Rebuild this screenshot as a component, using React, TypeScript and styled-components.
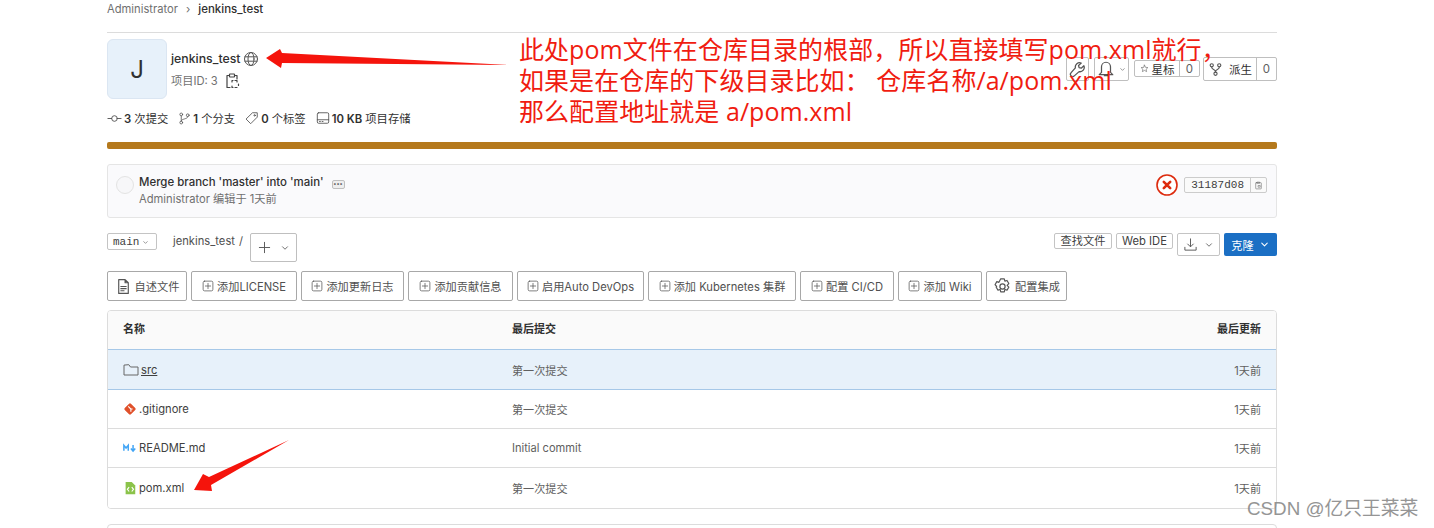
import React from "react";
import styled, { createGlobalStyle } from "styled-components";

const Global = createGlobalStyle`
  html, body { margin: 0; padding: 0; background: #fff; overflow: hidden; }
  body { width: 1434px; height: 528px; font-family: Inter, "Noto Sans CJK SC", "Liberation Sans", sans-serif; font-size: 11px; color: #303030; }
  * { box-sizing: border-box; }
`;
const Page = styled.div`position: relative; width: 1434px; height: 528px; overflow: hidden; padding: 0 157px 0 107px;`;
const Crumbs = styled.div`height: 33px; border-bottom: 1px solid #dcdcdc; padding-top: 3px; display: flex; gap: 8px; line-height: 13px; font-size: 11.2px; color: #707070;`;
const CrumbNow = styled.b`font-weight: 500; color: #303030; font-size: 11.5px;`;
const Header = styled.div`display: flex; margin-top: 6px; height: 60px;`;
const Avatar = styled.div`width: 60px; height: 60px; border-radius: 6px; border: 1px solid #dbe6f2; background: #e7f1fa; font-size: 24px; display: flex; align-items: center; justify-content: center; color: #303030;`;
const Titles = styled.div`margin-left: 4px; padding-top: 12px; width: 300px;`;
const Name = styled.div`display: flex; align-items: center; gap: 2px; font-size: 12.3px; line-height: 16px; color: #303030; font-weight: 500;`;
const Sub = styled.div`display: flex; align-items: center; gap: 6px; margin-top: 6px; font-size: 11.2px; line-height: 14px; color: #707070;`;
const Actions = styled.div`margin-left: auto; display: flex; align-items: flex-start; gap: 5px; padding-top: 18px; color: #303030;`;
const IconBtn = styled.div`height: 24px; border: 1px solid #bfbfbf; border-radius: 2px; display: flex; align-items: center; justify-content: center; gap: 4px; width: ${p => p.$w}px; background: #fff;`;
const Group = styled.div`height: ${p => p.$h}px; width: ${p => p.$w}px; margin-top: ${p => p.$m}px; margin-left: ${p => p.$l}px; border: 1px solid #bfbfbf; border-radius: 2px; display: flex; align-items: center; font-size: 11.5px; background: #fff;`;
const GroupLabel = styled.span`flex: 1; display: flex; align-items: center; justify-content: center; gap: 3px; height: 100%;`;
const Count = styled.span`border-left: 1px solid #bfbfbf; height: 100%; width: 20px; display: flex; align-items: center; justify-content: center; color: #606060;`;
const Stats = styled.div`display: flex; gap: 10px; margin-top: 11px; height: 16px; font-size: 11.3px; color: #303030; align-items: center;`;
const Stat = styled.span`display: flex; align-items: center; gap: 2px; b { font-weight: 600; }`;
const Bar = styled.div`height: 7px; margin-top: 16px; border-radius: 2px; background: #b5791c;`;
const Commit = styled.div`height: 54px; margin-top: 15px; border: 1px solid #e5e5e5; border-radius: 3px; background: #fafafc; display: flex; align-items: center; padding: 0 9px 0 8px;`;
const Circle = styled.div`width: 18px; height: 18px; margin-bottom: 12px; border-radius: 50%; border: 1px solid #e3e3e3; background: #f7f7f9;`;
const CommitText = styled.div`margin-left: 5px; line-height: 17px;`;
const CommitTitle = styled.div`font-size: 11.45px; font-weight: 500; color: #303030; display: flex; align-items: center; gap: 8px;`;
const CommitMeta = styled.div`font-size: 11.2px; color: #707070;`;
const Dots = styled.span`width: 13px; height: 9px; border: 1px solid #bfbfbf; border-radius: 2px; background: #eee; font-size: 6px; line-height: 6px; text-align: center; color: #555; margin-top: 4px;`;
const FailIcon = styled.div`margin-left: auto; display: flex; margin-right: 6px; margin-bottom: 12px;`;
const Sha = styled.div`height: 16px; margin-bottom: 12px; border: 1px solid #ccc; border-radius: 2px; display: flex; align-items: center; font-family: "Liberation Mono", monospace; font-size: 11px; color: #404040; background: #fafafa;`;
const ShaText = styled.span`padding: 0 6px 0 6px;`;
const ShaCopy = styled.span`border-left: 1px solid #ccc; height: 100%; width: 16px; display: flex; align-items: center; justify-content: center;`;
const Repo = styled.div`display: flex; align-items: flex-start; height: 29px; margin-top: 15px;`;
const Branch = styled.div`width: 50px; height: 17px; border: 1px solid #c4c4c4; border-radius: 2px; font-family: "Liberation Mono", monospace; font-size: 11px; display: flex; align-items: center; padding: 1px 0 0 5px; gap: 3px; color: #404040;`;
const Path = styled.div`margin-left: 16px; padding-top: 1px; font-size: 11.2px; color: #505050; display: flex; gap: 4px; line-height: 15px;`;
const Plus = styled.div`margin-left: 7px; width: 47px; height: 29px; border: 1px solid #bfbfbf; border-radius: 2px; display: flex; align-items: center; justify-content: center; gap: 8px;`;
const RepoRight = styled.div`margin-left: auto; display: flex; gap: 4px; align-items: flex-start;`;
const Small = styled.div`height: 16px; width: ${p => p.$w}px; border: 1px solid #c4c4c4; border-radius: 2px; text-align: center; font-size: 11.2px; line-height: 14px; color: #404040;`;
const Download = styled.div`width: 43px; height: 23px; border: 1px solid #c4c4c4; border-radius: 2px; display: flex; align-items: center; justify-content: center; gap: 6px;`;
const Clone = styled.div`width: 53px; height: 23px; background: #1b6fc4; border-radius: 2px; color: #fff; font-size: 11.2px; display: flex; align-items: center; justify-content: center; gap: 5px;`;
const Shortcuts = styled.div`display: flex; gap: 4px; margin-top: 9px;`;
const Shortcut = styled.div`height: 30px; width: ${p => p.$w}px; border: 1px solid #a8a8a8; border-radius: 2px; display: flex; align-items: center; justify-content: center; gap: 3px; font-size: 11.2px; color: #505050; white-space: nowrap;`;
const Table = styled.div`margin-top: 9px; border: 1px solid #dcdcdc; border-radius: 4px; overflow: hidden;`;
const Row = styled.div`display: grid; grid-template-columns: 389px 1fr 200px; align-items: center; height: ${p => p.$h}px; padding: 0 15px; font-size: 11.1px; color: #606060; background: ${p => p.$sel ? "#e7f1fa" : "#fff"}; border-bottom: 1px solid ${p => p.$sel ? "#a6c8e8" : "#dcdcdc"}; border-top: ${p => p.$sel ? "1px solid #a6c8e8" : "none"}; margin-top: ${p => p.$sel ? "-1px" : "0"}; &:last-child { border-bottom: none; }`;
const HeadRow = styled(Row)`font-weight: 600; color: #303030; background: #fafafa; padding-bottom: 4px; font-size: 11px;`;
const FileCell = styled.div`display: flex; align-items: center; gap: 2px; font-size: 11.2px; color: #404040;`;
const FileLink = styled.span`text-decoration: ${p => p.$u ? "underline" : "none"};`;
const TimeCell = styled.div`text-align: right;`;
const NextBox = styled.div`height: 30px; margin-top: 15px; border: 1px solid #dcdcdc; border-radius: 4px;`;
const Note = styled.div`position: absolute; left: 519px; top: 34px; font-size: 25px; line-height: 31px; color: #f01c10; white-space: nowrap; font-family: "Open Sans", "Noto Sans CJK SC", sans-serif; letter-spacing: 0.05px;`;
const Overlay = styled.svg`position: absolute; left: 0; top: 0; pointer-events: none;`;
const Mark = styled.div`position: absolute; left: 1247px; top: 497px; font-size: 18.8px; line-height: 24px; color: #8a8a8a; opacity: .9; font-family: "Liberation Sans", "Noto Sans CJK SC", sans-serif;`;

const S = ({ s = 12, c = "#555", w = 1, children }: any) => <svg width={s} height={s} viewBox="0 0 16 16" fill="none" stroke={c} strokeWidth={w} strokeLinecap="round" strokeLinejoin="round">{children}</svg>;
const Chev = ({ c = "#666", s = 9 }: any) => <S s={s} c={c} w={1.5}><path d="M4 6l4 4 4-4" /></S>;
const PlusBox = () => <S s={12}><rect x="1.5" y="1.5" width="13" height="13" rx="2" /><path d="M8 4.5v7M4.5 8h7" /></S>;
const Copy = ({ s = 16 }: any) => <S s={s} c="#444" w={1.2}><path d="M5 2.5H3v12h3M11 2.5h2V6" /><rect x="5.5" y="1" width="5" height="3" rx=".5" /><path d="M8 9V7.5h1M11 7.5h2V9M14.500 11v1.500M13 14.500h-2M9 14.500H8V13" /></S>;

const items: [string, number, any][] = [
  ["自述文件", 80, <S s={17} w={1.1}><path d="M3.5 1.5h6l3 3v10h-9zM9.5 1.5v3h3M5.5 8h5M5.5 10h5M5.5 12h3" /></S>],
  ["添加LICENSE", 106, <PlusBox />],
  ["添加更新日志", 103, <PlusBox />],
  ["添加贡献信息", 105, <PlusBox />],
  ["启用Auto DevOps", 127, <PlusBox />],
  ["添加 Kubernetes 集群", 148, <PlusBox />],
  ["配置 CI/CD", 94, <PlusBox />],
  ["添加 Wiki", 84, <PlusBox />],
  ["配置集成", 81, <S s={19}><path d="M6.5 1.5h3l.5 2 1.8-.6 1.500 2.600-1.400 1.500 1.400 1.500-1.500 2.600-1.800-.6-.5 2h-3l-.5-2-1.800.6-1.500-2.600L3.100 8 1.700 6.500l1.500-2.600 1.800.6z" /><circle cx="8" cy="8" r="2.200" /></S>],
];

export default function App() {
  return (
    <Page>
      <Global />
      <Crumbs>Administrator <span>›</span> <CrumbNow>jenkins_test</CrumbNow></Crumbs>
      <Header>
        <Avatar>J</Avatar>
        <Titles>
          <Name>jenkins_test <S s={16}><circle cx="8" cy="8" r="6.500" /><ellipse cx="8" cy="8" rx="3" ry="6.500" /><path d="M2 5.800h12M2 10.200h12" /></S></Name>
          <Sub>项目ID: 3 <Copy /></Sub>
        </Titles>
        <Actions>
          <IconBtn $w={23}><S s={17} w={1.2}><path d="M14 4.500l-2.500 2.300-2-.5-.5-2L11.500 2A4 4 0 006 6.500L2 11a2 2 0 003 3l4.500-4A4 4 0 0014 4.500z" /></S></IconBtn>
          <IconBtn $w={35}><S s={18} w={1.1}><path d="M8 2a4 4 0 00-4 4v5l-2 2h12l-2-2V6a4 4 0 00-4-4zM6.500 14h3" /></S><Chev s={7} /></IconBtn>
          <Group $w={66} $h={17} $m={3} $l={0}><GroupLabel><S s={9}><path d="M8 2l1.800 3.900 4.200.5-3.100 2.900.8 4.200L8 11.400l-3.700 2.100.8-4.200L2 6.400l4.200-.5z" /></S>星标</GroupLabel><Count>0</Count></Group>
          <Group $w={74} $h={24} $m={0} $l={-2}><GroupLabel><S s={15} w={1.200}><circle cx="4" cy="3.500" r="1.700" /><circle cx="12" cy="3.500" r="1.700" /><circle cx="8" cy="12.500" r="1.700" /><path d="M4 5.500c0 3 4 2 4 5M12 5.500c0 3-4 2-4 5" /></S>&nbsp;派生</GroupLabel><Count>0</Count></Group>
        </Actions>
      </Header>
      <Stats>
        <Stat><S s={15}><circle cx="8" cy="8" r="3" /><path d="M1 8h4M11 8h4" /></S><span><b>3</b> 次提交</span></Stat>
        <Stat><S s={13}><circle cx="4" cy="3" r="1.700" /><circle cx="4" cy="13" r="1.700" /><circle cx="12" cy="4" r="1.700" /><path d="M4 5v6M12 6c0 3-8 2-8 5" /></S><span><b>1</b> 个分支</span></Stat>
        <Stat><S s={14}><path d="M9 2h5v5l-7.500 7.500-5-5z" /><circle cx="11" cy="5" r=".8" /></S><span><b>0</b> 个标签</span></Stat>
        <Stat><S s={14}><rect x="1.500" y="2" width="13" height="12" rx="1.500" /><path d="M1.500 10h13M4 12h1M7 12h1" /></S><span><b>10 KB</b> 项目存储</span></Stat>
      </Stats>
      <Bar />
      <Commit>
        <Circle />
        <CommitText>
          <CommitTitle>Merge branch 'master' into 'main' <Dots>•••</Dots></CommitTitle>
          <CommitMeta>Administrator 编辑于 1天前</CommitMeta>
        </CommitText>
        <FailIcon><svg width="22" height="22" viewBox="0 0 22 22"><circle cx="11" cy="11" r="10" fill="#fff" stroke="#dd2b0e" strokeWidth="1.600" /><path d="M7.800 7.800l6.400 6.400M14.200 7.800l-6.400 6.400" stroke="#dd2b0e" strokeWidth="2.600" strokeLinecap="round" /></svg></FailIcon>
        <Sha><ShaText>31187d08</ShaText><ShaCopy><S s={9} c="#666"><rect x="3" y="3" width="10" height="11" rx="1" /><path d="M6 2h4v2H6zM8 8h3v3H8z" /></S></ShaCopy></Sha>
      </Commit>
      <Repo>
        <Branch>main <Chev s={7} /></Branch>
        <Path>jenkins_test <span>/</span></Path>
        <Plus><S s={15}><path d="M8 2.500v11M2.500 8h11" /></S><Chev s={10} /></Plus>
        <RepoRight>
          <Small $w={58}>查找文件</Small>
          <Small $w={57}>Web IDE</Small>
          <Download><S s={15}><path d="M8 2v8M5 7.500L8 10.500l3-3M2 11v3h12v-3" /></S><Chev s={10} /></Download>
          <Clone>克隆 <Chev c="#fff" s={11} /></Clone>
        </RepoRight>
      </Repo>
      <Shortcuts>
        {items.map(([t, w, ic]) => <Shortcut key={t} $w={w}>{ic}{t}</Shortcut>)}
      </Shortcuts>
      <Table>
        <HeadRow $h={39}><div>名称</div><div>最后提交</div><TimeCell>最后更新</TimeCell></HeadRow>
        <Row $h={41} $sel>
          <FileCell><S s={16} c="#666"><path d="M1 3.500V13h14V5H7.500L6 3z" /></S><FileLink $u>src</FileLink></FileCell><div>第一次提交</div><TimeCell>1天前</TimeCell>
        </Row>
        <Row $h={39}>
          <FileCell><svg width="14" height="14" viewBox="0 0 16 16"><rect x="3" y="3" width="10" height="10" rx="1.500" fill="#e0512b" transform="rotate(45 8 8)" /><path d="M6 5l3 3v3M9 8l2 0" stroke="#fff" strokeWidth="1.300" fill="none" /></svg>.gitignore</FileCell><div>第一次提交</div><TimeCell>1天前</TimeCell>
        </Row>
        <Row $h={39}>
          <FileCell><svg width="14" height="10" viewBox="0 0 16 10"><path d="M1 8V2l2.500 3L6 2v6M11.500 1.500V7M9 5.500l2.500 3 2.500-3" stroke="#42a5f5" strokeWidth="1.700" fill="none" /></svg>README.md</FileCell><div>Initial commit</div><TimeCell>1天前</TimeCell>
        </Row>
        <Row $h={40}>
          <FileCell><svg width="14" height="14" viewBox="0 0 16 16"><path d="M3 1h7l4 4v10H3z" fill="#8bc34a" /><path d="M7 7L5 9.500 7 12M10 7l2 2.500L10 12" stroke="#fff" strokeWidth="1.300" fill="none" /></svg>pom.xml</FileCell><div>第一次提交</div><TimeCell>1天前</TimeCell>
        </Row>
      </Table>
      <NextBox />
      <Overlay width="1434" height="528" viewBox="0 0 1434 528">
        <path d="M509 65 L282 53 L280 49 L266 58 L281 68 L282 63 Z" fill="#f5140c" />
        <path d="M289 440 L209 477 L203 474 L194 490 L212 491 L211 485 Z" fill="#f5140c" />
      </Overlay>
      <Note>此处pom文件在仓库目录的根部，所以直接填写pom.xml就行，<br />如果是在仓库的下级目录比如： 仓库名称/a/pom.xml<br />那么配置地址就是 a/pom.xml</Note>
      <Mark>CSDN @亿只王菜菜</Mark>
    </Page>
  );
}
